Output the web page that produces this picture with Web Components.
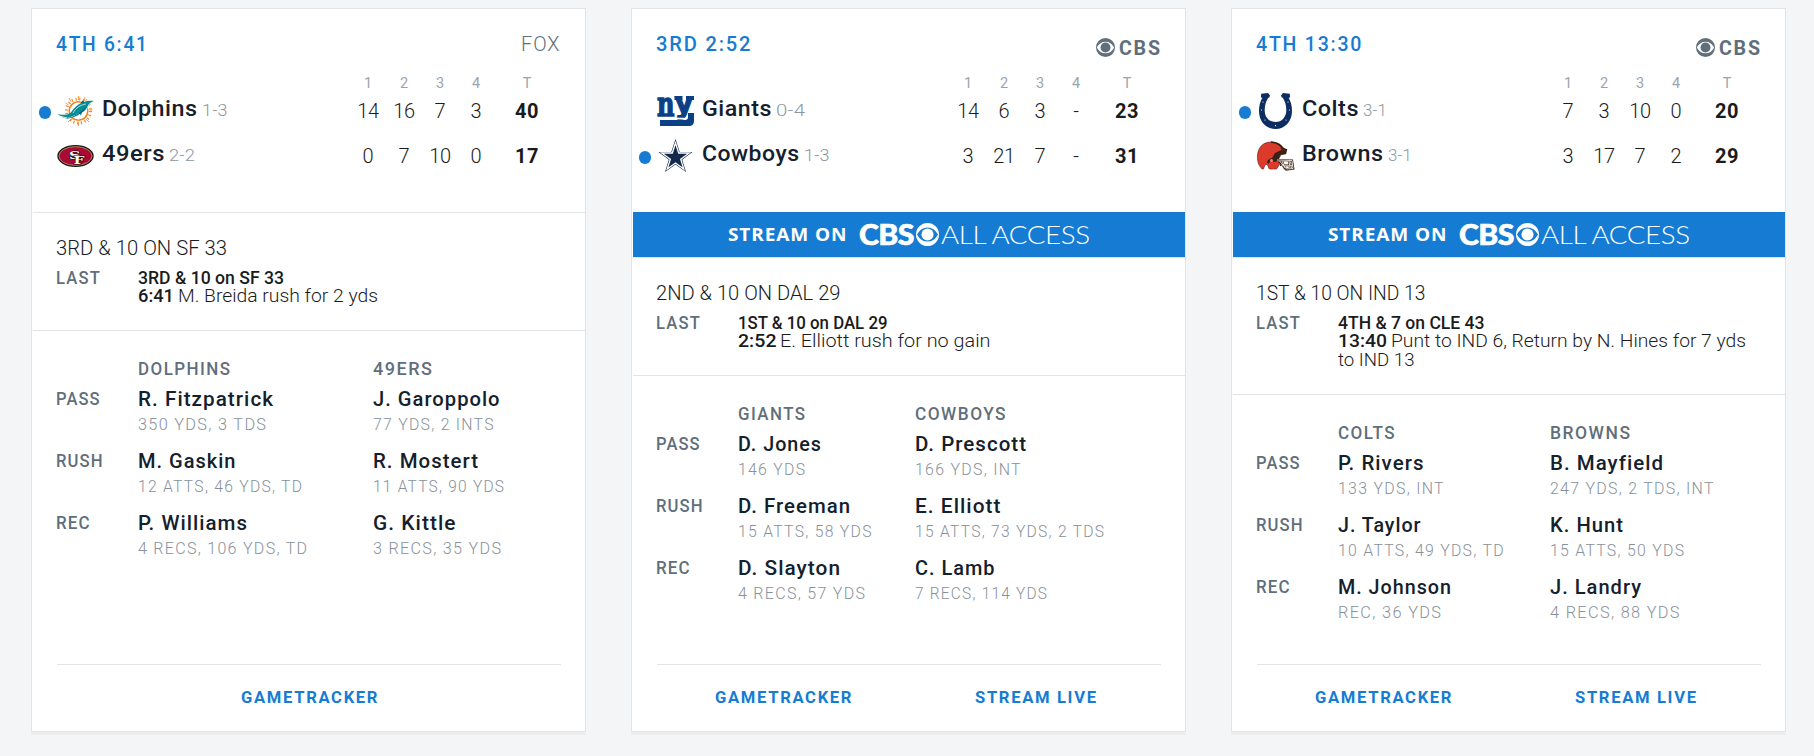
<!DOCTYPE html>
<html lang="en">
<head>
<meta charset="utf-8">
<title>NFL Scoreboard</title>
<style>
html,body{margin:0;height:100%}
body{background:#f4f5f7;font-family:Roboto,"Liberation Sans",sans-serif;overflow:hidden}
score-board{padding:8px 28px 0 31px}
</style>
</head>
<body>
<score-board></score-board>
<script>
const define=(name,cls)=>customElements.define(name,cls);
const fit=(w,t,cls='')=>`<fit-text w="${w}" class="${cls}">${t}</fit-text>`;

/* Text run condensed to a given measure. */
define('fit-text',class extends HTMLElement{
  connectedCallback(){
    if(this.shadowRoot)return;
    const w=+this.getAttribute('w');
    this.attachShadow({mode:'open'}).innerHTML=`<style>
      :host{display:inline-block;white-space:nowrap;width:${w}px;vertical-align:baseline}
      span{display:inline-block;transform-origin:0 50%}
    </style><span><slot></slot></span>`;
    const s=this.shadowRoot.querySelector('span');
    const ls=parseFloat(getComputedStyle(this).letterSpacing)||0;
    const natural=s.getBoundingClientRect().width-ls;
    s.style.transform=`scaleX(${(w+2)/natural})`;
    s.style.marginLeft='-1px';
  }
});

define('cbs-eye',class extends HTMLElement{
  connectedCallback(){
    this.attachShadow({mode:'open'}).innerHTML=`<style>
      :host{display:block;width:19px;height:19px}svg{display:block;width:100%;height:100%}
    </style><svg viewBox="0 0 24 24"><path fill="currentColor" fill-rule="evenodd" d="M12 0a12 12 0 1 0 0 24a12 12 0 1 0 0-24zM1 12Q5 4.6 12 4.6T23 12Q19 19.4 12 19.4T1 12z"/><circle cx="12" cy="12" r="6.3" fill="currentColor"/></svg>`;
  }
});

const LOGOS={
dolphins:`<g stroke="#f58220" fill="none"><circle cx="21.5" cy="18" r="9.3" stroke-width="1.6"/><circle cx="21.5" cy="18" r="12" stroke-width="3" stroke-dasharray="1.1 2.7"/><path stroke-width=".8" d="M21.5 3v4M21.5 29v4M8.500 10l3 2M32 29l-3-3M12 5l2 4M30 6l-2 3M11 29l3-3M33 17h2.500M28 4l-1 4"/></g>
<path fill="#fff" d="M12 24L20 12l14-4-4 8-6 8z"/><path fill="#008e97" d="M0 20.500c2 1.500 6 1.500 9 1.200 3-.2 4.500-1.700 6-3.700 2-3 5-6 9-8l2-2.500 1 1.500c4-1.500 8-1.500 10-1-3 1-5 2.500-6 4.500-1 3-3 5.500-6 7l-1 3-2-2.500c-5 3-10 5.500-14 4-3-.8-6-1-8-3.500z"/><path fill="#005778" d="M5 24c5 2 9 .5 13-1.500 4-2 8-5 11-9-2 5-6 8-11 10-4 1.800-9 3-13 .5zM24 10l2-2.500 1 1.500-1.500 1z"/><path d="M16 20c3-5 7-8 13-9" stroke="#fff" stroke-width=".7" fill="none"/>`,
niners:`<ellipse cx="18.500" cy="18" rx="18.200" ry="10.900" fill="#111"/><ellipse cx="18.500" cy="18" rx="16.600" ry="9.400" fill="#aa0a35" stroke="#b3995d" stroke-width=".9"/>
<g font-family="DejaVu Serif,serif" font-weight="700" font-size="14" fill="#fff" stroke="#111" stroke-width="1.500" paint-order="stroke"><text transform="translate(12 20.500) scale(1.150 .82)">S</text><text transform="translate(16.500 26) scale(1.100 .82)">F</text></g>`,
giants:`<g fill="#0b3f86" stroke="#0b3f86"><text font-family="DejaVu Serif,serif" font-weight="700" font-size="30" stroke-width="1.300" transform="translate(0 22.500) scale(.8 1.130)">n</text><text font-family="DejaVu Serif,serif" font-weight="700" font-size="30" stroke-width="1.300" transform="translate(16.800 22.500) scale(.92 1.130)" visibility="hidden"></text></g><text font-family="DejaVu Sans,sans-serif" font-weight="700" font-size="29" fill="#0b3f86" stroke="#0b3f86" stroke-width="1.400" transform="translate(18 20) scale(.95 1)">y</text><path fill="#0b3f86" d="M17.500 3h8v4h-8zM29 3h8v4h-8zM3 27h25q3 0 3-3v-4h6v8q0 5-5 5H3z"/><path stroke="#fff" stroke-width="1.600" d="M3 25.500h25q2 0 2-2" fill="none"/>`,
cowboys:`<g><path fill="#13294b" d="M18.500 1L22.700 14H35.500L25.200 21.700 29 34 18.500 26.500 8 34 11.800 21.700 1.500 14H14.300z"/><path fill="none" stroke="#fff" stroke-width="1.300" d="M18.500 5L21.700 15H32.300L23.700 21.300 26.800 31 18.500 25 10.200 31 13.300 21.300 4.700 15H15.300z"/></g>`,
colts:`<path fill="#0b2d62" d="M4.200.8L11 0l2 2.400-1 2.500-.7-.3C9 8.500 7.700 12 7.700 17c0 7.500 4.500 12 10.800 12s10.800-4.500 10.800-12c0-5-1.300-8.500-3.600-12.400l-.7.3-1-2.500L26 0l6.800.8.300 3.700-1.500.3C33.800 8.500 35 13 35 18c0 10.500-7 18-16.500 18S2 28.500 2 18C2 13 3.200 8.500 5.400 4.800l-1.500-.3z"/><g fill="#fff"><circle cx="6" cy="9" r=".6"/><circle cx="4.500" cy="17" r=".6"/><circle cx="8" cy="27" r=".6"/><circle cx="18.500" cy="32.700" r=".6"/><circle cx="29" cy="27" r=".6"/><circle cx="32.500" cy="17" r=".6"/><circle cx="31" cy="9" r=".6"/></g>`,
browns:`<path fill="#dc3a2a" stroke="#54201b" stroke-width=".6" d="M5 31C1 27 0 22 .5 17 1.500 8 7 4 14 4c7 0 11 3 13 7l1.500 5-4 .5-3 4 1 6-3 4.500h-7c-1.500-1-1-4-3-4.500-1.500 0-2 1.500-3 4.500z"/><path d="M14 4c6 .5 11 4 13 9" fill="none" stroke="#2e1a10" stroke-width="1.300"/><path fill="#382318" d="M10 24c1-3 4-4 5-4l3-5 6-3 5 1-1 3-5 1-1 5-4 2-4-1-3 3z"/><circle cx="14.500" cy="22.500" r="1.500" fill="#e98c80"/><path fill="#dc3a2a" d="M16 24l5 1-1 5-5 1-2-4z"/><path fill="none" stroke="#382318" stroke-width="2.200" d="M20 22l15 .5 1.300 8-7 1-7-8M25 23l3 8M32 22l1 9M23 27l13 .5M24 10l5 2-1 4"/><path fill="none" stroke="#eee6dd" stroke-width=".9" d="M20 22l15 .5 1 8-6.500.5-7-8M25 23l3 7M32 22l1 8M24 27l12 .5"/>`
};
define('team-logo',class extends HTMLElement{
  connectedCallback(){
    this.attachShadow({mode:'open'}).innerHTML=`<style>
      :host{display:block;width:37px;height:36px}svg{display:block;overflow:visible}
    </style><svg width="37" height="36" viewBox="0 0 37 36">${LOGOS[this.getAttribute('team')]}</svg>`;
  }
});

define('team-row',class extends HTMLElement{
  connectedCallback(){
    const d=this.data;
    this.attachShadow({mode:'open'}).innerHTML=`<style>
      :host{display:grid;grid-template-columns:37px 8.5px 1fr 36px 36px 36px 36px 66px;height:45px;align-items:center;position:relative;line-height:24px}
      .dot{position:absolute;left:-18.500px;top:18px;width:12.500px;height:12.500px;border-radius:50%;background:#167cd3}
      team-logo{grid-column:1;margin-top:1px}
      .nm{grid-column:3;display:flex;align-items:baseline;gap:7px;font-size:22px;font-weight:500;color:#14212d;letter-spacing:.5px;padding-bottom:2px}
      .rec{font-size:17px;font-weight:300;color:#8d979f;letter-spacing:.2px}
      i{font-style:normal;text-align:center;font-size:20px;font-weight:300;color:#1b1b1b;letter-spacing:-.3px}
      i.t{font-weight:700;letter-spacing:.5px}
    </style>${d.dot?'<span class="dot"></span>':''}<team-logo team="${d.logo}"></team-logo>
    <span class="nm">${fit(d.w,d.name)}${fit(d.rw,d.rec,'rec')}</span>${d.q.map((v,n)=>`<i class="${n==4?'t':''}">${v}</i>`).join('')}`;
  }
});

define('game-score',class extends HTMLElement{
  connectedCallback(){
    const g=this.data;
    const r=this.attachShadow({mode:'open'});
    r.innerHTML=`<style>
      :host{display:block;height:203px;padding:23px 25px 0 24px;box-sizing:border-box}
      header{display:flex;justify-content:space-between;height:47px;line-height:24px;font-size:20px}
      .clock{font-weight:500;color:#167cd3;letter-spacing:1.800px}
      .net{display:flex;gap:4.500px;color:#5f6f7b;font-weight:300;letter-spacing:1px;margin-right:1.500px}
      .net.cbs{font-weight:700;letter-spacing:1.800px;padding-top:4px}
      cbs-eye{margin-top:1.500px}
      .q{display:grid;grid-template-columns:1fr 36px 36px 36px 36px 66px;height:9px;line-height:10px;font-size:14.500px;color:#9ba4ac;text-align:center}
      .q b{font-weight:400}.q b:first-child{grid-column:2}
    </style><header><span class="clock">${fit(g.cw,g.clock)}</span>${g.stream?`<span class="net cbs"><cbs-eye></cbs-eye>${fit(39,'CBS')}</span>`:`<span class="net">${fit(36.5,'FOX')}</span>`}</header>
    <div class="q"><b>1</b><b>2</b><b>3</b><b>4</b><b>T</b></div>`;
    for(const t of g.teams){const e=document.createElement('team-row');e.data=t;r.append(e)}
  }
});

define('stream-banner',class extends HTMLElement{
  connectedCallback(){
    this.attachShadow({mode:'open'}).innerHTML=`<style>
      :host{display:flex;height:45px;background:#167cd3;color:#fff;align-items:center;justify-content:center;line-height:45px}
      .a{font:700 17px/43px "Open Sans",sans-serif;letter-spacing:.8px;margin-right:14px}
      .b{font:900 27.500px/43px Lato,sans-serif;-webkit-text-stroke:.6px #fff;letter-spacing:-.5px;margin-right:3px}
      cbs-eye{width:23px;height:23px;margin-right:2.500px}
      .c{font:300 26px/43px Lato,sans-serif;letter-spacing:-.4px}
    </style>${fit(116.5,'STREAM ON','a')}${fit(53.5,'CBS','b')}<cbs-eye></cbs-eye>${fit(147,'ALL ACCESS','c')}`;
  }
});

define('last-play',class extends HTMLElement{
  connectedCallback(){
    const p=this.data;
    this.attachShadow({mode:'open'}).innerHTML=`<style>
      :host{display:block;border-top:1px solid #e2e5e8;padding:23px 25px 25px 24px;color:#1b1b1b}
      .sit{font-size:20px;line-height:24px;font-weight:300;height:24px}
      .row{display:grid;grid-template-columns:82px 1fr;margin-top:9px}
      .lab{font-size:17.500px;line-height:18px;font-weight:500;color:#5f6f7b;letter-spacing:1.300px}
      .d{display:flex;gap:5.500px;height:18px;line-height:18px;font-size:18px;font-weight:300}
      .d.x{height:19px;line-height:20px}
      b{font-weight:500}
    </style><div class="sit">${fit(p.sw,p.sit)}</div><div class="row"><span class="lab">${fit(42,'LAST')}</span><div>
    <div class="d"><b>${fit(p.dw,p.down)}</b></div><div class="d"><b>${fit(p.tw,p.time)}</b>${fit(p.pw,p.play)}</div>${p.more?`<div class="d x">${fit(p.mw,p.more)}</div>`:''}</div></div>`;
  }
});

define('player-stats',class extends HTMLElement{
  connectedCallback(){
    const s=this.data;
    this.attachShadow({mode:'open'}).innerHTML=`<style>
      :host{display:grid;grid-template-columns:82px ${s.col}px 1fr;align-content:start;border-top:1px solid #e2e5e8;padding:29px 25px 0 24px;color:#14212d}
      .h{font-size:17.500px;line-height:18px;height:27px;font-weight:500;color:#5f6f7b;letter-spacing:1.500px}
      .l{font-size:17.500px;line-height:24px;font-weight:500;color:#5f6f7b;letter-spacing:1.100px}
      .p{height:62px;letter-spacing:1px}
      .p div{height:24px;line-height:24px;font-size:20px;font-weight:500}
      .p small{display:block;margin-top:4px;font-size:16px;line-height:20px;font-weight:300;color:#87919a;letter-spacing:1.300px}
    </style><span class="h"></span>${s.heads.map(h=>`<span class="h">${fit(h[0],h[1])}</span>`).join('')}
    ${s.rows.map((r,n)=>`<span class="l">${fit([41.5,44.5,31.5][n],['PASS','RUSH','REC'][n])}</span>${r.map(c=>`<div class="p"><div>${fit(c[0],c[1])}</div><small>${fit(c[2],c[3])}</small></div>`).join('')}`).join('')}`;
  }
});

define('game-links',class extends HTMLElement{
  connectedCallback(){
    this.attachShadow({mode:'open'}).innerHTML=`<style>
      :host{display:grid;grid-auto-flow:column;grid-auto-columns:1fr;justify-items:center;margin:auto 24px 0 24px;border-top:1px solid #e2e5e8;padding:20px 0 22px;line-height:24px;font-size:17px;font-weight:700;color:#167cd3;letter-spacing:1.700px}
    </style>${fit(134.5,'GAMETRACKER')}${this.hasAttribute('stream')?fit(119,'STREAM LIVE'):''}`;
  }
});

define('game-card',class extends HTMLElement{
  connectedCallback(){
    const g=this.data,r=this.attachShadow({mode:'open'});
    r.innerHTML=`<style>:host{display:flex;flex-direction:column;box-sizing:border-box;width:555px;height:724px;background:#fff;border:1px solid #e2e5e8;padding-left:1px;box-shadow:0 3px 0 #ebedee}</style>`;
    const add=(n,d)=>{const e=document.createElement(n);if(d)e.data=d;r.append(e);return e};
    add('game-score',g);
    if(g.stream)add('stream-banner');
    add('last-play',g.play);
    add('player-stats',g.stats);
    const l=document.createElement('game-links');if(g.stream)l.setAttribute('stream','');r.append(l);
  }
});

const GAMES=[
{clock:'4TH 6:41',cw:89,teams:[
  {logo:'dolphins',dot:1,name:'Dolphins',w:93,rec:'1-3',rw:23.5,q:[14,16,7,3,40]},
  {logo:'niners',name:'49ers',w:60.5,rec:'2-2',rw:24,q:[0,7,10,0,17]}],
 play:{sit:'3RD &amp; 10 ON SF 33',sw:169,down:'3RD &amp; 10 on SF 33',dw:144,time:'6:41',tw:34,play:'M. Breida rush for 2 yds',pw:198},
 stats:{col:235,heads:[[90,'DOLPHINS'],[57,'49ERS']],rows:[
  [[133,'R. Fitzpatrick',126,'350 YDS, 3 TDS'],[124.5,'J. Garoppolo',118.5,'77 YDS, 2 INTS']],
  [[95.5,'M. Gaskin',162,'12 ATTS, 46 YDS, TD'],[103,'R. Mostert',129,'11 ATTS, 90 YDS']],
  [[107,'P. Williams',167,'4 RECS, 106 YDS, TD'],[80.5,'G. Kittle',126,'3 RECS, 35 YDS']]]}},
{clock:'3RD 2:52',cw:92.5,stream:1,teams:[
  {logo:'giants',name:'Giants',w:67.5,rec:'0-4',rw:27,q:[14,6,3,'-',23]},
  {logo:'cowboys',dot:1,name:'Cowboys',w:95,rec:'1-3',rw:23.5,q:[3,21,7,'-',31]}],
 play:{sit:'2ND &amp; 10 ON DAL 29',sw:182.5,down:'1ST &amp; 10 on DAL 29',dw:147.5,time:'2:52',tw:36.5,play:'E. Elliott rush for no gain',pw:208.5},
 stats:{col:177,heads:[[65,'GIANTS'],[88.5,'COWBOYS']],rows:[
  [[81,'D. Jones',65,'146 YDS'],[109,'D. Prescott',103.5,'166 YDS, INT']],
  [[110,'D. Freeman',131.5,'15 ATTS, 58 YDS'],[83.5,'E. Elliott',187,'15 ATTS, 73 YDS, 2 TDS']],
  [[100,'D. Slayton',125,'4 RECS, 57 YDS'],[77.5,'C. Lamb',130,'7 RECS, 114 YDS']]]}},
{clock:'4TH 13:30',cw:103.5,stream:1,teams:[
  {logo:'colts',dot:1,name:'Colts',w:54.5,rec:'3-1',rw:22,q:[7,3,10,0,20]},
  {logo:'browns',name:'Browns',w:79,rec:'3-1',rw:22,q:[3,17,7,2,29]}],
 play:{sit:'1ST &amp; 10 ON IND 13',sw:167.5,down:'4TH &amp; 7 on CLE 43',dw:144.5,time:'13:40',tw:47,play:'Punt to IND 6, Return by N. Hines for 7 yds',pw:353,more:'to IND 13',mw:74.5},
 stats:{col:212,heads:[[54.5,'COLTS'],[78,'BROWNS']],rows:[
  [[83.5,'P. Rivers',103.5,'133 YDS, INT'],[111,'B. Mayfield',161.5,'247 YDS, 2 TDS, INT']],
  [[80.5,'J. Taylor',163.5,'10 ATTS, 49 YDS, TD'],[71,'K. Hunt',132,'15 ATTS, 50 YDS']],
  [[111,'M. Johnson',101,'REC, 36 YDS'],[89,'J. Landry',127.5,'4 RECS, 88 YDS']]]}}
];
define('score-board',class extends HTMLElement{
  connectedCallback(){
    const r=this.attachShadow({mode:'open'});
    r.innerHTML=`<style>:host{display:flex;gap:45px;box-sizing:border-box}</style>`;
    for(const g of GAMES){const e=document.createElement('game-card');e.data=g;r.append(e)}
  }
});
</script>
</body>
</html>
